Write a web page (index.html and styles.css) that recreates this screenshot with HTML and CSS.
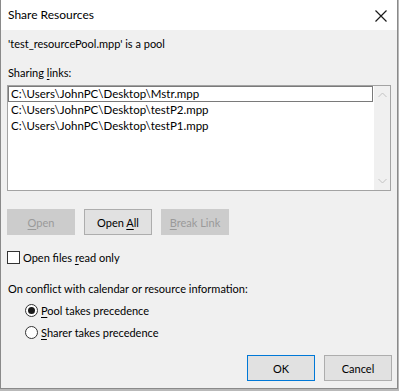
FILE: index.html
```html
<!DOCTYPE html>
<html lang="en">
<head>
    <meta charset="UTF-8">
    <meta name="viewport" content="width=device-width, initial-scale=1.0">
    <title>Share Resources</title>
    <link rel="stylesheet" href="styles.css">
</head>
<body>
    <div class="dialog">
        <header class="title-bar">
            <h1>Share Resources</h1>
            <span class="close">
                <svg width="12" height="12" viewBox="0 0 12 12">
                    <path d="M0.5 0.5 L11.5 11.5 M11.5 0.5 L0.5 11.5" stroke="#1a1a1a" stroke-width="1.2" fill="none"/>
                </svg>
            </span>
        </header>

        <section class="content">
            <p class="pool-name">'test_resourcePool.mpp' is a pool</p>
            <p class="label">Sharing <u>l</u>inks:</p>

            <div class="listbox">
                <ul class="links">
                    <li class="selected">C:\Users\JohnPC\Desktop\Mstr.mpp</li>
                    <li>C:\Users\JohnPC\Desktop\testP2.mpp</li>
                    <li>C:\Users\JohnPC\Desktop\testP1.mpp</li>
                </ul>
                <div class="scrollbar">
                    <svg width="9" height="6" viewBox="0 0 9 6"><path d="M0.5 5 L4.5 1 L8.5 5" stroke="#c2c2c2" fill="none"/></svg>
                    <svg width="9" height="6" viewBox="0 0 9 6"><path d="M0.5 1 L4.5 5 L8.5 1" stroke="#c2c2c2" fill="none"/></svg>
                </div>
            </div>

            <div class="actions">
                <button class="btn disabled"><u>O</u>pen</button>
                <button class="btn">Open <u>A</u>ll</button>
                <button class="btn disabled"><u>B</u>reak Link</button>
            </div>

            <div class="check-row">
                <span class="checkbox"></span>
                <span>Open files <u>r</u>ead only</span>
            </div>

            <p class="conflict">On conflict with calendar or resource information:</p>
            <div class="radio-row first">
                <span class="radio checked"></span>
                <span><u>P</u>ool takes precedence</span>
            </div>
            <div class="radio-row">
                <span class="radio"></span>
                <span><u>S</u>harer takes precedence</span>
            </div>

            <div class="footer">
                <button class="btn default">OK</button>
                <button class="btn">Cancel</button>
            </div>
        </section>
    </div>
</body>
</html>
```

FILE: styles.css
```css
body {
    margin: 0;
    padding: 0;
    background-color: #b9b9b9;
    font-family: Lato, "Noto Sans", sans-serif;
    font-size: 11px;
    color: #000000;
}

.dialog {
    width: 396px;
    height: 388px;
    background-color: #f0f0f0;
    border: 1px solid #8a8a8a;
    border-top: none;
}

.title-bar {
    height: 30px;
    background-color: #ffffff;
    display: flex;
    align-items: center;
    justify-content: space-between;
    padding: 0 10px 0 7px;
}

.title-bar h1 {
    margin: 0;
    font-size: 12px;
    font-weight: normal;
    line-height: 20px;
}

.close {
    display: flex;
    margin-top: 1px;
}

.content {
    padding: 0 5px 0 6px;
}

p {
    margin: 0;
    line-height: 16px;
}

u {
    text-decoration-thickness: 1px;
    text-underline-offset: 2px;
}

.pool-name {
    margin-top: 6px;
    padding-left: 1px;
}

.label {
    margin-top: 13px;
    padding-left: 1px;
}

.listbox {
    margin-top: 4px;
    height: 104px;
    width: 382px;
    border: 1px solid #a3a3a3;
    background-color: #ffffff;
    display: flex;
}

.links {
    list-style: none;
    margin: 0;
    padding: 0;
    flex: 1;
}

.links li {
    height: 14px;
    line-height: 14px;
    padding-left: 2px;
    border: 1px solid transparent;
    white-space: nowrap;
    font-size: 11.5px;
}

.links li.selected {
    border-color: #7a7a7a;
    margin-right: 1px;
}

.scrollbar {
    width: 16px;
    background-color: #f0f0f0;
    display: flex;
    flex-direction: column;
    justify-content: space-between;
    align-items: center;
    padding: 6px 0 6px 0;
}

.actions {
    display: flex;
    gap: 9px;
    margin-top: 18px;
}

.btn {
    width: 68px;
    height: 26px;
    padding: 0;
    font-family: inherit;
    font-size: 11px;
    color: #000000;
    background-color: #e1e1e1;
    border: 1px solid #adadad;
    border-radius: 0;
}

.btn.disabled {
    background-color: #cccccc;
    border-color: #cccccc;
    color: #9a9a9a;
}

.btn.default {
    border-color: #0078d7;
}

.check-row {
    display: flex;
    align-items: center;
    gap: 3px;
    margin-top: 14px;
    height: 16px;
}

.checkbox {
    width: 11px;
    height: 11px;
    border: 1px solid #333333;
    background-color: #ffffff;
}

.conflict {
    margin-top: 16px;
    padding-left: 1px;
}

.radio-row {
    display: flex;
    align-items: center;
    gap: 3px;
    height: 16px;
    margin-top: 6px;
    padding-left: 18px;
}

.radio-row.first {
    margin-top: 5px;
}

.radio {
    width: 11px;
    height: 11px;
    border: 1px solid #333333;
    border-radius: 50%;
    background-color: #ffffff;
    display: flex;
    align-items: center;
    justify-content: center;
}

.radio.checked::after {
    content: "";
    width: 7px;
    height: 7px;
    border-radius: 50%;
    background-color: #1a1a1a;
}

.footer {
    display: flex;
    justify-content: flex-end;
    gap: 9px;
    margin-top: 15px;
}
```
